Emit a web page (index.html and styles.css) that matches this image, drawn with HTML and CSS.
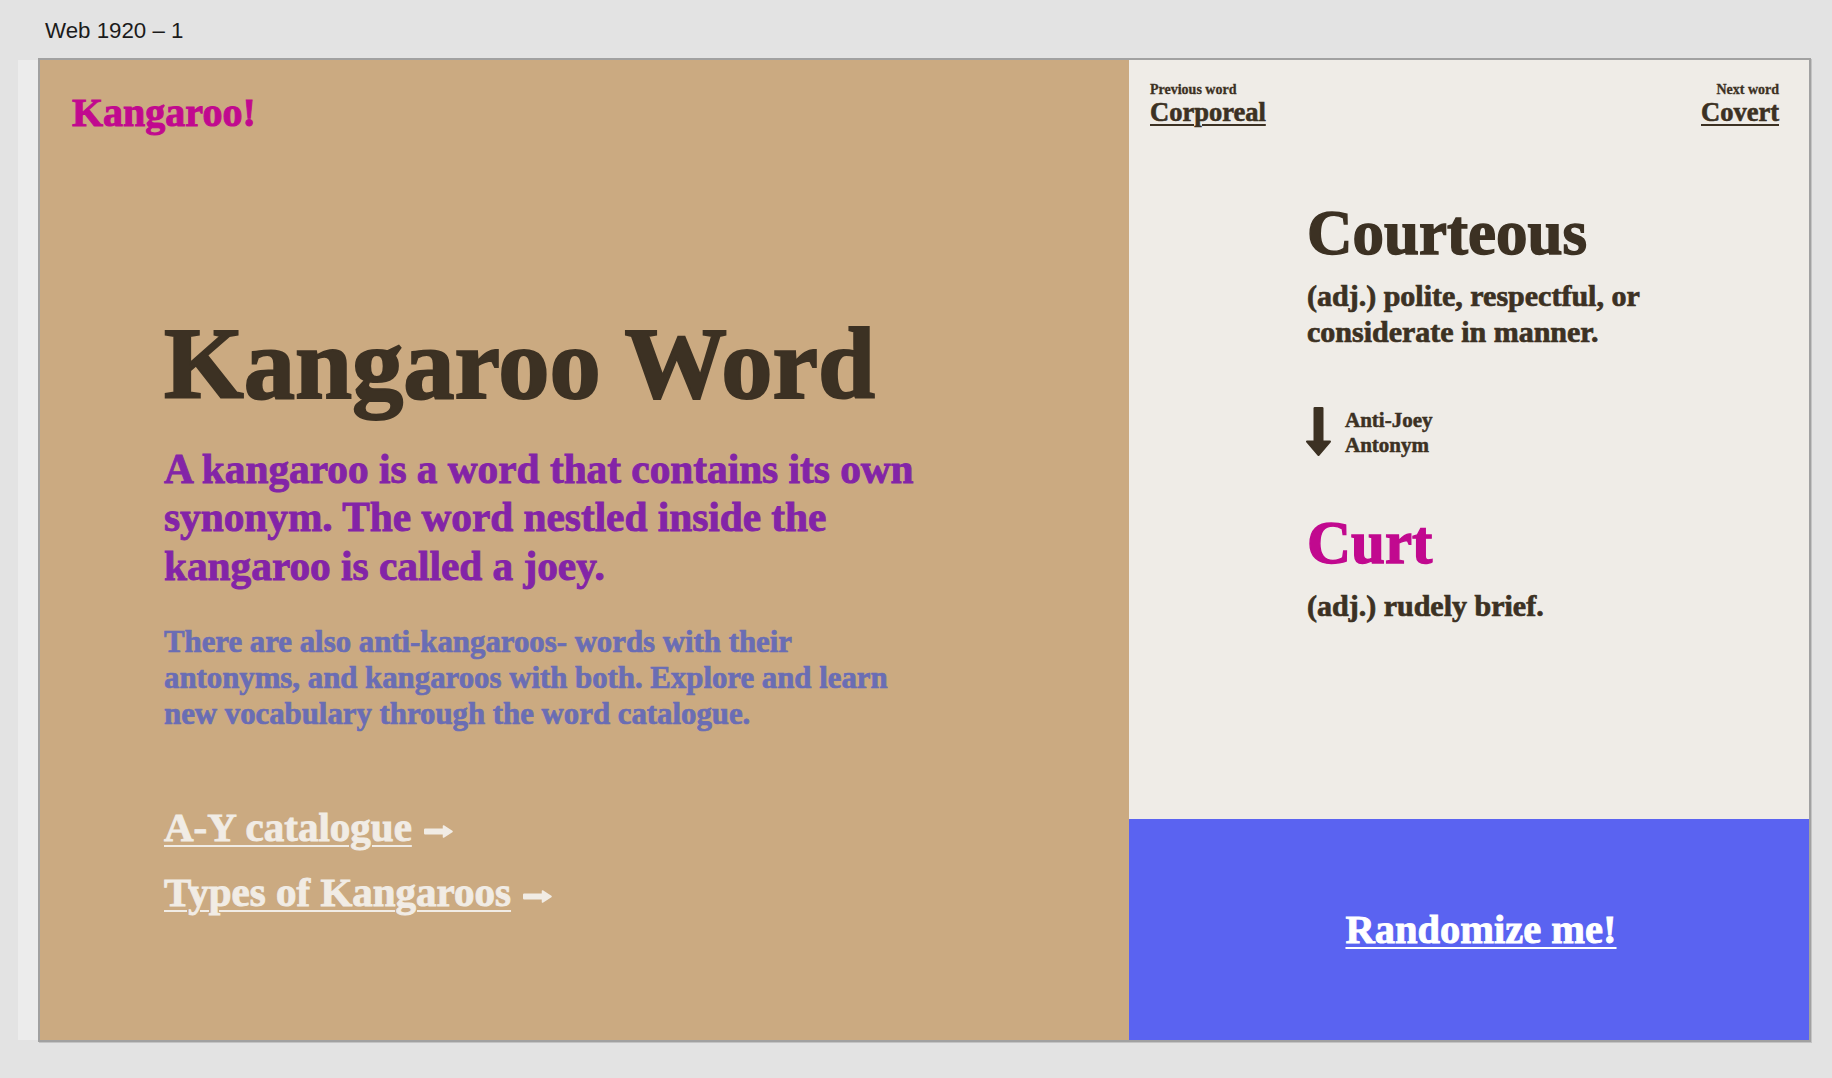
FILE: index.html
```html
<!DOCTYPE html>
<html lang="en">
<head>
<meta charset="utf-8">
<title>Kangaroo Word</title>
<link rel="stylesheet" href="styles.css">
</head>
<body>
<div class="canvas">
  <div class="label">Web 1920 – 1</div>
  <div class="stage">
    <div class="strip"></div>
    <main class="artboard">
      <section class="left">
        <a class="logo" href="#">Kangaroo!</a>
        <div class="intro">
          <h1 class="title">Kangaroo Word</h1>
          <p class="lead">A kangaroo is a word that contains its own synonym. The word nestled inside the kangaroo is called a joey.</p>
          <p class="sub">There are also anti-kangaroos- words with their antonyms, and kangaroos with both. Explore and learn new vocabulary through the word catalogue.</p>
          <div class="links">
            <div class="link-row"><a href="#" class="big-link">A-Y catalogue</a><svg class="right-arrow" width="29" height="13" viewBox="0 0 29 13"><rect x="0" y="4" width="21" height="5" rx="1"/><path d="M19.5 1 L28 6.5 L19.5 12 Z" stroke-width="1.5" stroke-linejoin="round"/></svg></div>
            <div class="link-row second"><a href="#" class="big-link">Types of Kangaroos</a><svg class="right-arrow" width="29" height="13" viewBox="0 0 29 13"><rect x="0" y="4" width="21" height="5" rx="1"/><path d="M19.5 1 L28 6.5 L19.5 12 Z" stroke-width="1.5" stroke-linejoin="round"/></svg></div>
          </div>
        </div>
      </section>
      <section class="right">
        <div class="word-area">
          <nav class="nav">
            <div class="nav-item">
              <div class="nav-label">Previous word</div>
              <a href="#" class="nav-word">Corporeal</a>
            </div>
            <div class="nav-item next">
              <div class="nav-label">Next word</div>
              <a href="#" class="nav-word">Covert</a>
            </div>
          </nav>
          <div class="entry">
            <h2 class="word">Courteous</h2>
            <p class="def">(adj.) polite, respectful, or considerate in manner.</p>
            <div class="relation">
              <svg class="down-arrow" width="25" height="49" viewBox="0 0 25 49"><rect x="8" y="0" width="9" height="36" rx="1"/><path d="M1 34.5 L24 34.5 L12.5 48 Z" stroke-width="2" stroke-linejoin="round"/></svg>
              <div class="relation-text">Anti-Joey<br>Antonym</div>
            </div>
            <h2 class="word joey">Curt</h2>
            <p class="def def-joey">(adj.) rudely brief.</p>
          </div>
        </div>
        <div class="random">
          <a href="#" class="random-link">Randomize me!</a>
        </div>
      </section>
    </main>
  </div>
</div>
</body>
</html>
```
FILE: styles.css
```css
* {
  box-sizing: border-box;
}

html, body {
  margin: 0;
  padding: 0;
}

body {
  background: #e3e3e3;
  width: 1832px;
  height: 1078px;
  overflow: hidden;
}

.canvas {
  width: 1832px;
}

.label {
  height: 58px;
  padding: 18px 0 0 45px;
  font-family: "Liberation Sans", Arial, sans-serif;
  font-size: 22.3px;
  line-height: 26px;
  color: #1b1b1b;
}

.stage {
  display: flex;
  padding-left: 18px;
}

.strip {
  width: 20px;
  height: 980px;
  margin-top: 2px;
  background: #ececec;
}

.artboard {
  display: flex;
  width: 1773px;
  height: 984px;
  border: 2px solid #a1a1a1;
  box-shadow: 1px 1px 0 0 #c4c4c4;
  font-family: "Liberation Serif", "Times New Roman", serif;
  font-weight: 700;
  color: #3c3123;
  -webkit-text-stroke-width: 0.5px;
}

.artboard a {
  color: inherit;
}

/* Left panel */
.left {
  width: 1089px;
  height: 980px;
  background: #cbaa81;
  padding: 30px 40px 0 32px;
}

.logo {
  display: block;
  font-size: 40px;
  line-height: 46px;
  color: #c1098f !important;
  text-decoration: none;
  -webkit-text-stroke-width: 1px;
}

.intro {
  margin: 173px 0 0 92px;
}

.title {
  margin: 0;
  font-size: 102.5px;
  line-height: 110px;
  font-weight: 700;
  color: #3c3123;
  -webkit-text-stroke-width: 2px;
}

.lead {
  margin: 25.5px 0 0;
  max-width: 795px;
  font-size: 41.3px;
  line-height: 48.5px;
  color: #8324a7;
  -webkit-text-stroke-width: 0.9px;
}

.sub {
  margin: 33.5px 0 0;
  max-width: 745px;
  font-size: 30.8px;
  line-height: 36px;
  color: #6a6db4;
  -webkit-text-stroke-width: 0.7px;
}

.links {
  margin-top: 72.5px;
}

.link-row {
  font-size: 41px;
  line-height: 46px;
  color: #f1ece5;
  -webkit-text-stroke-width: 0.9px;
}

.link-row.second {
  margin-top: 19px;
}

.big-link {
  color: #f1ece5 !important;
  text-decoration: underline;
  text-decoration-thickness: 2px;
  text-underline-offset: 4px;
}

.right-arrow {
  margin-left: 12px;
  vertical-align: middle;
  fill: #f1ece5;
  stroke: #f1ece5;
}

/* Right panel */
.right {
  width: 680px;
  height: 980px;
  display: flex;
  flex-direction: column;
}

.word-area {
  height: 759px;
  background: #efece7;
}

.nav {
  display: flex;
  justify-content: space-between;
  padding: 22px 30px 0 21px;
}

.nav-item.next {
  text-align: right;
}

.nav-label {
  font-size: 14px;
  line-height: 16px;
  -webkit-text-stroke-width: 0.3px;
}

.nav-word {
  display: inline-block;
  margin-top: 1px;
  font-size: 26.5px;
  line-height: 27px;
  text-decoration: underline;
  text-decoration-thickness: 1.5px;
  text-underline-offset: 3px;
  -webkit-text-stroke-width: 0.6px;
}

.entry {
  margin: 72px 0 0 178px;
  width: 400px;
}

.word {
  margin: 0;
  font-size: 63px;
  line-height: 70px;
  font-weight: 700;
  -webkit-text-stroke-width: 1.4px;
}

.word.joey {
  margin-top: 50px;
  font-size: 61px;
  color: #c1098f;
}

.def {
  margin: 9.5px 0 0;
  font-size: 30px;
  line-height: 36px;
  -webkit-text-stroke-width: 0.7px;
}

.def.def-joey {
  margin-top: 10.5px;
}

.relation {
  display: flex;
  align-items: flex-start;
  margin-top: 58px;
}

.down-arrow {
  margin-left: -1px;
  margin-top: -1px;
  fill: #3c3123;
  stroke: #3c3123;
  flex: none;
}

.relation-text {
  margin-left: 14px;
  font-size: 21px;
  line-height: 25px;
  -webkit-text-stroke-width: 0.5px;
}

.random {
  height: 221px;
  background: #5a63f1;
  display: flex;
  align-items: center;
  justify-content: center;
  padding-left: 24px;
}

.random-link {
  font-size: 40.5px;
  line-height: 46px;
  color: #ffffff !important;
  text-decoration: underline;
  text-decoration-thickness: 2px;
  text-underline-offset: 4px;
  -webkit-text-stroke-width: 0.9px;
}
```
